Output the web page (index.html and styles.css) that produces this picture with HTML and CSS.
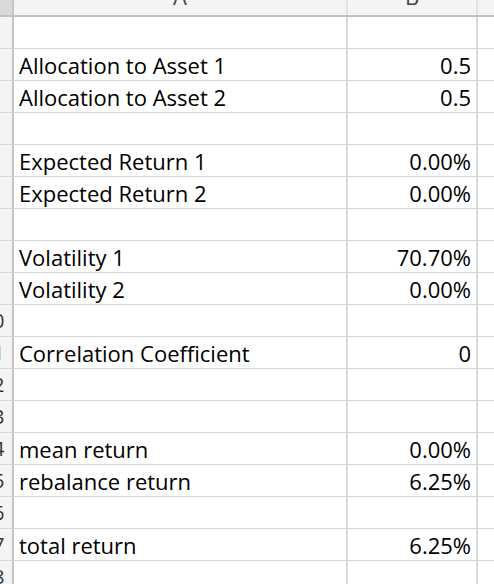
FILE: index.html
```html
<!DOCTYPE html>
<html>
<head>
<meta charset="utf-8">
<link rel="stylesheet" href="styles.css">
</head>
<body>
<div class="sheet">
  <div class="row head">
    <div class="rh corner"><span class="corner-mark"></span></div>
    <div class="c a"><span class="hl">A</span></div>
    <div class="c b"><span class="hl">B</span></div>
    <div class="c rest"></div>
  </div>
  <div class="row"><div class="rh"><span>1</span></div><div class="c a"></div><div class="c b"></div><div class="c rest"></div></div>
  <div class="row"><div class="rh"><span>2</span></div><div class="c a">Allocation to Asset 1</div><div class="c b">0.5</div><div class="c rest"></div></div>
  <div class="row"><div class="rh"><span>3</span></div><div class="c a">Allocation to Asset 2</div><div class="c b">0.5</div><div class="c rest"></div></div>
  <div class="row"><div class="rh"><span>4</span></div><div class="c a"></div><div class="c b"></div><div class="c rest"></div></div>
  <div class="row"><div class="rh"><span>5</span></div><div class="c a">Expected Return 1</div><div class="c b">0.00%</div><div class="c rest"></div></div>
  <div class="row"><div class="rh"><span>6</span></div><div class="c a">Expected Return 2</div><div class="c b">0.00%</div><div class="c rest"></div></div>
  <div class="row"><div class="rh"><span>7</span></div><div class="c a"></div><div class="c b"></div><div class="c rest"></div></div>
  <div class="row"><div class="rh"><span>8</span></div><div class="c a">Volatility 1</div><div class="c b">70.70%</div><div class="c rest"></div></div>
  <div class="row"><div class="rh"><span>9</span></div><div class="c a">Volatility 2</div><div class="c b">0.00%</div><div class="c rest"></div></div>
  <div class="row"><div class="rh"><span>10</span></div><div class="c a"></div><div class="c b"></div><div class="c rest"></div></div>
  <div class="row"><div class="rh"><span>11</span></div><div class="c a">Correlation Coefficient</div><div class="c b">0</div><div class="c rest"></div></div>
  <div class="row"><div class="rh"><span>12</span></div><div class="c a"></div><div class="c b"></div><div class="c rest"></div></div>
  <div class="row"><div class="rh"><span>13</span></div><div class="c a"></div><div class="c b"></div><div class="c rest"></div></div>
  <div class="row"><div class="rh"><span>14</span></div><div class="c a">mean return</div><div class="c b">0.00%</div><div class="c rest"></div></div>
  <div class="row"><div class="rh"><span>15</span></div><div class="c a">rebalance return</div><div class="c b">6.25%</div><div class="c rest"></div></div>
  <div class="row"><div class="rh"><span>16</span></div><div class="c a"></div><div class="c b"></div><div class="c rest"></div></div>
  <div class="row"><div class="rh"><span>17</span></div><div class="c a">total return</div><div class="c b">6.25%</div><div class="c rest"></div></div>
  <div class="row"><div class="rh"><span>18</span></div><div class="c a"></div><div class="c b"></div><div class="c rest"></div></div>
</div>
</body>
</html>
```
FILE: styles.css
```css
html, body {
  margin: 0;
  padding: 0;
  background: #ffffff;
  overflow: hidden;
}
.sheet {
  width: 494px;
  height: 584px;
  overflow: hidden;
  font-family: "Open Sans", Lato, sans-serif;
  font-size: 22px;
  color: #000;
}
.row {
  display: flex;
  height: 31px;
  border-bottom: 1px solid #d6d6d6;
}
.row.head {
  height: 15px;
  border-bottom: 2px solid #c0c0c0;
  background: #f4f4f4;
}
.rh {
  width: 12px;
  flex: 0 0 12px;
  border-right: 2px solid #c4c4c4;
  background: #f4f4f4;
  display: flex;
  justify-content: flex-end;
  align-items: center;
  overflow: hidden;
  color: #333;
  font-size: 20px;
}
.rh span {
  flex: 0 0 38px;
  width: 38px;
  text-align: center;
}
.corner {
  justify-content: flex-start;
  align-items: stretch;
}
.corner-mark {
  width: 8px;
  background: #d9d9d9;
}
.c {
  display: flex;
  align-items: center;
  overflow: hidden;
  white-space: nowrap;
}
.c.a {
  width: 327px;
  flex: 0 0 327px;
  padding-left: 5px;
  border-right: 2px solid #d8d8d8;
}
.c.b {
  width: 123px;
  flex: 0 0 123px;
  padding-right: 5px;
  justify-content: flex-end;
  border-right: 2px solid #d8d8d8;
}
.c.rest {
  flex: 1;
}
.head .c {
  justify-content: center;
  align-items: flex-end;
  border-right-color: #e2e2e2;
  color: #444;
}
.head .c.a,
.head .c.b {
  padding: 0;
}
.head .c.a { width: 332px; flex-basis: 332px; }
.head .c.b { width: 128px; flex-basis: 128px; }
.hl {
  line-height: 20px;
  margin-bottom: 9px;
}
```
